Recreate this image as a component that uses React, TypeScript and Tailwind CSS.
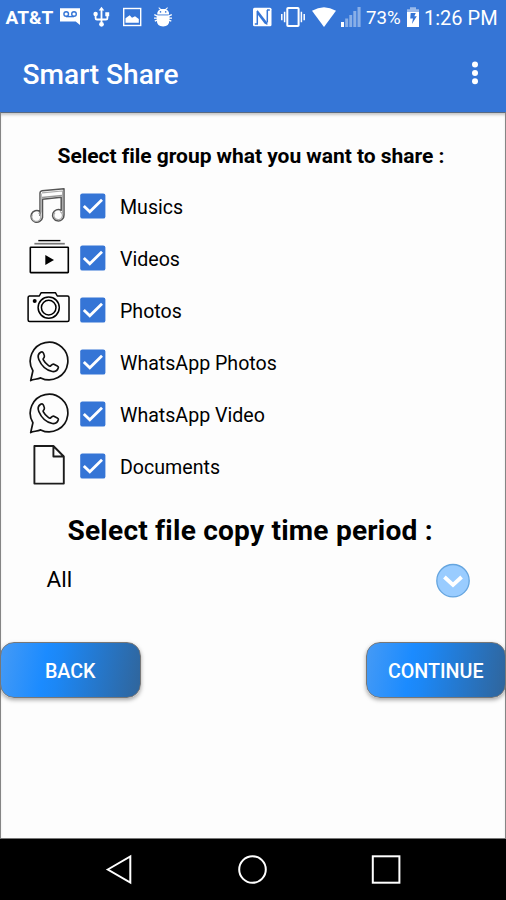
import React from "react";

function MusicIcon() {
  return (
    <svg width="44" height="44" viewBox="0 -1.5 44 44" fill="none" stroke="#555" strokeWidth="1.5" strokeLinejoin="round">
      <path d="M14 30.5V7.3Q14 5.5 16 5.2L38 3.2V29.5A5.7 5.7 0 1 1 35.2 24.8V11.8L16.5 13.7V32A5.8 5.8 0 1 1 13.9 26" />
      <path d="M16 12L36 10" stroke="#999" />
      <path d="M12.5 27.5a4.5 4.5 0 1 1-6 1.5M34 26a4.3 4.3 0 1 1-5 1" stroke="#aaa" strokeWidth="1.2" />
      <path d="M36.6 5V28M15.2 8V27M16 7.3L36 5.5" stroke="#aaa" strokeWidth="1.2" />
    </svg>
  );
}

function VideoIcon() {
  return (
    <svg width="44" height="44" viewBox="0 -2 44 44" fill="none">
      <path d="M12.3 2.6H34.4" stroke="#000" strokeWidth="1.4" />
      <path d="M8.4 5.7H38.8" stroke="#777" strokeWidth="1.7" />
      <rect x="4.3" y="9.2" width="38" height="25.4" rx=".5" stroke="#000" strokeWidth="1.6" />
      <path d="M19.3 17L28 22L19.3 27Z" fill="#000" />
    </svg>
  );
}

function CameraIcon() {
  return (
    <svg width="44" height="44" viewBox="0 -2 44 44" fill="none" stroke="#000" strokeWidth="1.5" strokeLinejoin="round">
      <path d="M3.3 6H13.3L15.2 2.7H29.4L31.3 6H41.5Q43 6 43 7.5V30Q43 31.5 41.5 31.5H3.6Q2.1 31.5 2.1 30V7.5Q2.1 6 3.6 6Z" />
      <circle cx="22.7" cy="17.6" r="10.6" />
      <circle cx="22.7" cy="17.6" r="7.3" />
      <circle cx="8.7" cy="11" r="2" fill="#000" stroke="none" />
    </svg>
  );
}

function WhatsAppIcon() {
  return (
    <svg width="44" height="44" viewBox=".3 1 44 44" fill="none" stroke="#111" strokeWidth="1.7" strokeLinejoin="round">
      <path d="M5 41.5L7.2 31.7A18.8 18.8 0 1 1 15 38.9C11 40.6 8 40 5 41.5Z" />
      <path d="M14.9 13.3C12.4 15 11.8 17.4 13.1 20.5C15.4 26 20.4 31.2 26.6 32.5C29.4 33 31.9 31.3 32.7 28.6C32.9 27.7 32.4 27.3 31.6 26.9L28.2 25.2C26.9 24.6 26.1 25.7 25 26.8C24.3 27.4 23.4 27 22.6 26.4C20.3 24.9 18.7 23 17.5 20.7C17.1 19.7 17.9 19.3 18.5 18.4C19.2 17.3 18.7 16.2 17.9 14.5C17.2 13 16.4 12.3 14.9 13.3Z" />
    </svg>
  );
}

function DocumentIcon() {
  return (
    <svg width="44" height="44" viewBox="-.4 1 44 44" fill="none" stroke="#1c1c1c" strokeWidth="1.9" strokeLinejoin="round">
      <path d="M8 3H27L37.4 13.5V40.6H8ZM27 3V13.5H37.4" />
    </svg>
  );
}

function CheckBox() {
  return (
    <svg width="26" height="26" viewBox="0 0 26 26" fill="none">
      <rect x=".2" y=".4" width="25.2" height="25.2" rx="2.2" fill="#3575d6" />
      <path d="M3.8 12.9L9.8 18.8L22 6.7" stroke="#fff" strokeWidth="2.8" />
    </svg>
  );
}

const groups = [
  { label: "Musics", Icon: MusicIcon },
  { label: "Videos", Icon: VideoIcon },
  { label: "Photos", Icon: CameraIcon },
  { label: "WhatsApp Photos", Icon: WhatsAppIcon },
  { label: "WhatsApp Video", Icon: WhatsAppIcon },
  { label: "Documents", Icon: DocumentIcon },
];

function StatusBar() {
  return (
    <div className="flex h-[34px] items-center text-white">
      <span className="ml-[5.5px] w-[54.5px] shrink-0 pt-[1px] text-[19px] font-bold leading-[34px]">AT&amp;T</span>
      <svg width="130" height="34" viewBox="60 0 130 34" fill="none" className="shrink-0">
        <path d="M60 8.3H80V25L75.7 21.5H60Z" fill="#fff" />
        <g stroke="#3575d6" strokeWidth="1.4">
          <circle cx="66.2" cy="14" r="2.3" />
          <circle cx="74" cy="14" r="2.3" />
          <path d="M66 16.6H74" />
        </g>
        <path d="M101.5 9V24M95.6 15V18.2Q95.6 19.5 97 19.5H106Q107.4 19.5 107.4 18.2V14" stroke="#fff" strokeWidth="1.8" />
        <path d="M101.5 6.7L104.3 10.5H98.7ZM105.3 12.3H109.2V16.2H105.3Z" fill="#fff" />
        <circle cx="95.6" cy="14" r="2.2" fill="#fff" />
        <circle cx="101.5" cy="24.3" r="2.4" fill="#fff" />
        <rect x="123.7" y="8.5" width="17" height="17" stroke="#fff" strokeWidth="1.4" />
        <path d="M125.5 22.8V18.3L129.7 15.2L132 17.7L135 16.2L138.8 19V22.8Z" fill="#fff" />
        <path d="M157.3 14.4V12.8Q157.8 10.4 160 9.6L158.4 7.9L159 7.3L161 9H165.3L167.3 7.3L168 7.9L166.3 9.6Q168.5 10.4 169 12.8V14.4ZM156.8 15.6H169.4V20Q169.4 26.5 163.1 26.5Q156.8 26.5 156.8 20Z" fill="#fff" />
        <path d="M154.3 14.6L158 16.4H168L171.8 14.6M154.8 21.2L158 19.8H168L171.3 21.2M154 18.1H172" stroke="#fff" strokeWidth="1.3" />
        <circle cx="160.5" cy="11.9" r=".8" fill="#3575d6" />
        <circle cx="165.7" cy="11.9" r=".8" fill="#3575d6" />
      </svg>
      <svg width="111" height="34" viewBox="251 0 111 34" fill="none" className="ml-[61px] shrink-0">
        <rect x="253" y="7.7" width="18.5" height="18.5" rx="1.5" fill="#fff" />
        <path d="M257.3 23.5V11M267.3 22.5V10M254.8 23.9H258M267 10H269.8" stroke="#3575d6" strokeWidth="1.5" />
        <path d="M257.3 9.7L267.4 22.7V25L264.5 23.5L257.3 14Z" fill="#3575d6" />
        <rect x="287.3" y="8" width="11.3" height="18" rx=".8" stroke="#fff" strokeWidth="2" />
        <path d="M284.6 11.8V22.2M281.8 14V20.3M301.4 11.8V22.2M304.2 14V20.3" stroke="#fff" strokeWidth="1.5" />
        <path d="M312 10.7Q324 3.7 336 10.7L324 27Z" fill="#fff" />
        <path d="M341 22H344V27H341Z" fill="#fff" />
        <path d="M345.2 18.5H348.2V27H345.2ZM349.3 15H352.2V27H349.3ZM353.3 11H356.3V27H353.3ZM357.5 7H360.6V27H357.5Z" fill="#fff" fillOpacity=".42" />
      </svg>
      <span className="ml-[4px] w-[40px] shrink-0 whitespace-nowrap pt-[2px] text-[18.7px] leading-[34px]">73%</span>
      <svg width="14" height="34" viewBox="0 0 14 34" fill="none" className="shrink-0">
        <path d="M1 12V9.2H4V7.2H10V9.2H13V12Z" fill="#fff" fillOpacity=".5" />
        <path d="M1 12H13V27H1Z" fill="#fff" />
        <path d="M4.7 12.9H9.8L8.3 16.2H10.8L5.9 24L7 18.5H4.2Z" fill="#3575d6" />
      </svg>
      <span className="ml-[4px] shrink-0 whitespace-nowrap pt-[2px] text-[20px] leading-[34px]">1:26 PM</span>
    </div>
  );
}

function ActionButton({ children }: { children: React.ReactNode }) {
  return (
    <button className="h-[56px] w-[140.5px] rounded-[14px] border-[1.5px] border-[#777] bg-linear-[100deg,#459af5_0%,#1b8bff_32%,#1c87f5_42%,#30659b_100%] pt-[4px] text-[19.7px] font-medium text-white shadow-[0_2px_4px_rgba(0,0,0,0.35)]">
      {children}
    </button>
  );
}

export default function App() {
  return (
    <div className="flex h-[900px] w-[506px] flex-col overflow-hidden bg-black font-['Roboto',sans-serif] text-black">
      <header className="h-[112px] shrink-0 bg-[#3575d6]">
        <StatusBar />
        <div className="flex h-[78px] items-center justify-between pl-[22.5px] pr-[27px] text-white">
          <h1 className="whitespace-nowrap pt-[4px] text-[28.1px] font-medium leading-[74px]">Smart Share</h1>
          <svg width="8" height="26" viewBox="0 0 8 26" fill="#fff">
            <circle cx="4" cy="4.6" r="3" />
            <circle cx="4" cy="13" r="3" />
            <circle cx="4" cy="21.3" r="3" />
          </svg>
        </div>
      </header>
      <main className="flex h-[727px] shrink-0 flex-col border border-x-[#858585] border-b-[#777] border-t-[#5a6a80] bg-[#fdfdfd] shadow-[inset_0_3px_3px_-1px_rgba(0,0,0,0.22)]">
        <h2 className="mt-[29px] h-[28px] w-full whitespace-nowrap pl-[56.5px] text-[21px] font-bold leading-[28px] tracking-[-0.03px]">Select file group what you want to share :</h2>
        <ul className="mt-[14px]">
          {groups.map(({ label, Icon }) => (
            <li key={label} className="flex h-[52px] pl-[25px]">
              <span className="h-[44px] w-[44px]"><Icon /></span>
              <span className="ml-[10px] mt-[9px] h-[26px] w-[26px]"><CheckBox /></span>
              <span className="ml-[14px] mt-[10px] whitespace-nowrap text-[19.6px] leading-[28px]">{label}</span>
            </li>
          ))}
        </ul>
        <h2 className="mt-[17px] h-[36px] whitespace-nowrap pl-[66.5px] text-[28.1px] font-bold leading-[36px] tracking-[0.2px]">Select file copy time period :</h2>
        <div className="mt-[14px] flex h-[36px] items-center justify-between pl-[45.5px] pr-[34px]">
          <span className="pb-[4px] text-[22.5px] leading-[32px]">All</span>
          <svg width="36" height="36" viewBox="0 0 36 36" fill="none">
            <circle cx="18" cy="17.7" r="16.2" fill="#99ccff" stroke="#65a5df" strokeWidth="1.3" />
            <path d="M9.4 14L18 22L26.6 14" stroke="#fff" strokeWidth="3.8" />
          </svg>
        </div>
        <div className="-mx-[1px] mt-[43px] flex justify-between">
          <ActionButton>BACK</ActionButton>
          <ActionButton>CONTINUE</ActionButton>
        </div>
      </main>
      <nav className="flex grow items-center justify-between pl-[105px] pr-[104px]">
        <svg width="30" height="32" viewBox="0 .5 30 32" fill="none" stroke="#fff" strokeWidth="2">
          <path d="M2.8 16L25.3 3V29Z" />
        </svg>
        <svg width="32" height="32" viewBox=".5 .5 32 32" fill="none" stroke="#fff" strokeWidth="2">
          <circle cx="16" cy="16" r="13.3" />
        </svg>
        <svg width="32" height="32" viewBox="0 .5 32 32" fill="none" stroke="#fff" strokeWidth="2">
          <rect x="2.8" y="2.8" width="26.6" height="26.4" />
        </svg>
      </nav>
    </div>
  );
}
